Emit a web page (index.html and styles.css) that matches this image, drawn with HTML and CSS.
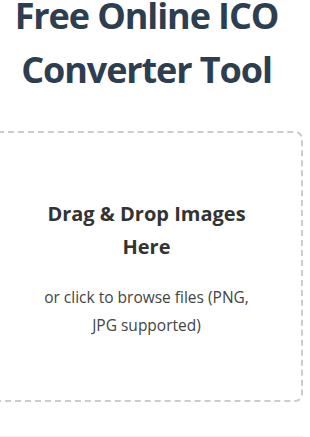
FILE: index.html
```html
<!DOCTYPE html>
<html lang="en">
<head>
<meta charset="utf-8">
<title>Free Online ICO Converter Tool</title>
<link rel="stylesheet" href="styles.css">
</head>
<body>
<main class="page">
  <h1 class="title">Free Online ICO Converter Tool</h1>
  <section class="dropzone">
    <h3 class="dropzone-title">Drag &amp; Drop Images Here</h3>
    <p class="dropzone-text">or click to browse files (PNG, JPG supported)</p>
  </section>
  <section class="next-section"></section>
</main>
</body>
</html>
```

FILE: styles.css
```css
html, body {
  margin: 0;
  padding: 0;
  background: #ffffff;
  overflow: hidden;
}

body {
  font-family: "Open Sans", "Noto Sans", sans-serif;
  color: #333333;
}

.page {
  width: 313px;
  margin: -11px 0 0 -10px;
}

.title {
  margin: 0 0 34px;
  font-size: 36px;
  line-height: 54px;
  font-weight: 700;
  letter-spacing: -1.1px;
  color: #2c3e50;
  text-align: center;
}

.dropzone {
  border: 2px dashed #cccccc;
  border-radius: 8px;
  padding: 64px 40px 61px;
  text-align: center;
}

.dropzone-title {
  margin: 0 0 20px;
  font-size: 20px;
  line-height: 33px;
  font-weight: 700;
  color: #333333;
}

.dropzone-text {
  margin: 0;
  font-size: 15.5px;
  line-height: 28px;
  color: #444444;
}

.next-section {
  margin-top: 34px;
  border-top: 1px solid #eeeeee;
  height: 20px;
}
```
